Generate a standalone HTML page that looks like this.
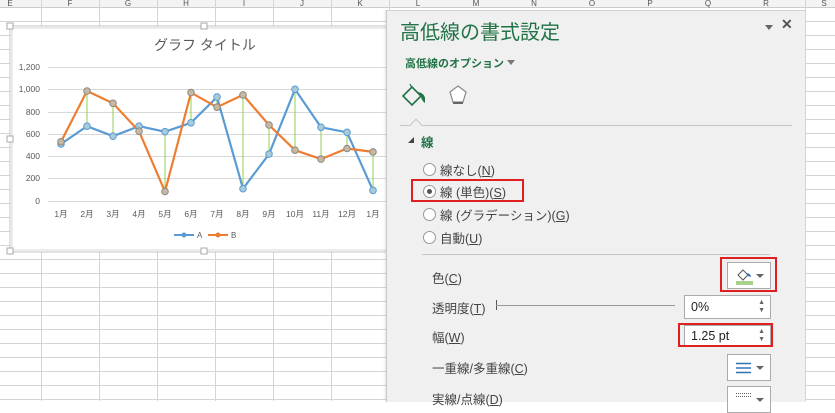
<!DOCTYPE html>
<html><head><meta charset="utf-8"><style>
body{margin:0;width:835px;height:401px;overflow:hidden;background:#fff;position:relative;font-family:"Liberation Sans","Noto Sans CJK JP",sans-serif;}
.abs{position:absolute}
.p{color:#444;font-size:12.5px}
.u{text-decoration:underline}
.rad{position:absolute;width:11px;height:11px;border:1px solid #999;border-radius:50%;background:#fff}
.box{position:absolute;background:#fff;border:1px solid #aaa;box-sizing:border-box}
.red{position:absolute;border:2px solid #e02020;box-sizing:border-box}
.spin{position:absolute;right:5px;font-size:7px;color:#666;line-height:8px}
.dd{position:absolute;right:6px;top:50%;margin-top:-2px;width:0;height:0;border-left:4px solid transparent;border-right:4px solid transparent;border-top:4px solid #666}
</style></head><body>
<svg class="abs" style="left:0;top:0" width="835" height="401">
<rect x="0" y="0" width="835" height="7" fill="#f3f3f3"/>
<line x1="0" y1="7.5" x2="835" y2="7.5" stroke="#ccc"/>
<g stroke="#d4d4d4" stroke-width="1">
<path d="M41.5 0V401M99.5 0V401M157.5 0V401M215.5 0V401M273.5 0V401M331.5 0V401M389.5 0V401M805.5 0V401"/>
<path d="M0 21.5H835M0 35.5H835M0 49.5H835M0 63.5H835M0 77.5H835M0 91.5H835M0 105.5H835M0 119.5H835M0 133.5H835M0 147.5H835M0 161.5H835M0 175.5H835M0 189.5H835M0 203.5H835M0 217.5H835M0 231.5H835M0 245.5H835M0 259.5H835M0 273.5H835M0 287.5H835M0 301.5H835M0 315.5H835M0 329.5H835M0 343.5H835M0 357.5H835M0 371.5H835M0 385.5H835M0 399.5H835"/>
</g>
<g font-size="8" fill="#555" text-anchor="middle"><text x="10" y="6">E</text><text x="70" y="6">F</text><text x="128" y="6">G</text><text x="186" y="6">H</text><text x="244" y="6">I</text><text x="302" y="6">J</text><text x="360" y="6">K</text><text x="418" y="6">L</text><text x="476" y="6">M</text><text x="534" y="6">N</text><text x="592" y="6">O</text><text x="650" y="6">P</text><text x="708" y="6">Q</text><text x="766" y="6">R</text><text x="824" y="6">S</text></g>
<!-- chart -->
<rect x="10" y="26" width="380" height="226" fill="#fff" stroke="#c6c6c6"/>
<rect x="12" y="28" width="376" height="222" fill="#fff" stroke="#d9d9d9"/>
<g fill="#fff" stroke="#aaa"><rect x="7" y="23" width="6" height="6"/><rect x="201" y="23" width="6" height="6"/><rect x="7" y="136" width="6" height="6"/><rect x="7" y="248" width="6" height="6"/><rect x="201" y="248" width="6" height="6"/></g>
<text x="205" y="50" text-anchor="middle" font-size="14" fill="#595959">グラフ タイトル</text>
<g stroke="#d9d9d9"><path d="M48 67.5H386M48 89.5H386M48 112.5H386M48 134.5H386M48 156.5H386M48 178.5H386M48 201.5H386"/></g>
<g font-size="8.5" fill="#595959" text-anchor="end"><text x="40" y="70">1,200</text><text x="40" y="92">1,000</text><text x="40" y="115">800</text><text x="40" y="137">600</text><text x="40" y="159">400</text><text x="40" y="181">200</text><text x="40" y="204">0</text></g>
<g font-size="8.5" fill="#595959" text-anchor="middle"><text x="61" y="217">1月</text><text x="87" y="217">2月</text><text x="113" y="217">3月</text><text x="139" y="217">4月</text><text x="165" y="217">5月</text><text x="191" y="217">6月</text><text x="217" y="217">7月</text><text x="243" y="217">8月</text><text x="269" y="217">9月</text><text x="295" y="217">10月</text><text x="321" y="217">11月</text><text x="347" y="217">12月</text><text x="373" y="217">1月</text></g>
<g stroke="#92d050" stroke-width="1"><path d="M61 144V142M87 126V91M113 136V103M139 126V131M165 132V191M191 123V93M217 97V107M243 189V95M269 154V125M295 89V150M321 127V159M347 132V148M373 190V152"/></g>
<polyline fill="none" stroke="#5b9bd5" stroke-width="2.2" points="61,144 87,126.2 113,136.2 139,126.2 165,131.7 191,122.8 217,97.1 243,188.7 269,154.1 295,89.3 321,127.3 347,132.3 373,190.4"/>
<polyline fill="none" stroke="#ed7d31" stroke-width="2.2" points="61,141.8 87,91 113,103.3 139,131.2 165,191.5 191,92.6 217,107.2 243,94.9 269,125 295,150.2 321,159.1 347,148.5 373,151.9"/>
<g fill="#a9cbd8" stroke="#5b9bd5" stroke-width="1"><circle cx="61" cy="144" r="3.3"/><circle cx="87" cy="126.2" r="3.3"/><circle cx="113" cy="136.2" r="3.3"/><circle cx="139" cy="126.2" r="3.3"/><circle cx="165" cy="131.7" r="3.3"/><circle cx="191" cy="122.8" r="3.3"/><circle cx="217" cy="97.1" r="3.3"/><circle cx="243" cy="188.7" r="3.3"/><circle cx="269" cy="154.1" r="3.3"/><circle cx="295" cy="89.3" r="3.3"/><circle cx="321" cy="127.3" r="3.3"/><circle cx="347" cy="132.3" r="3.3"/><circle cx="373" cy="190.4" r="3.3"/></g>
<g fill="#c8b8a0" stroke="#888" stroke-width="1"><circle cx="61" cy="141.8" r="3.3"/><circle cx="87" cy="91" r="3.3"/><circle cx="113" cy="103.3" r="3.3"/><circle cx="139" cy="131.2" r="3.3"/><circle cx="165" cy="191.5" r="3.3"/><circle cx="191" cy="92.6" r="3.3"/><circle cx="217" cy="107.2" r="3.3"/><circle cx="243" cy="94.9" r="3.3"/><circle cx="269" cy="125" r="3.3"/><circle cx="295" cy="150.2" r="3.3"/><circle cx="321" cy="159.1" r="3.3"/><circle cx="347" cy="148.5" r="3.3"/><circle cx="373" cy="151.9" r="3.3"/></g>
<line x1="174" y1="235" x2="194" y2="235" stroke="#5b9bd5" stroke-width="2"/><circle cx="184" cy="235" r="2.5" fill="#5b9bd5"/>
<text x="197" y="238" font-size="8" fill="#595959">A</text>
<line x1="208" y1="235" x2="228" y2="235" stroke="#ed7d31" stroke-width="2"/><circle cx="218" cy="235" r="2.5" fill="#ed7d31"/>
<text x="231" y="238" font-size="8" fill="#595959">B</text>
</svg>
<!-- panel -->
<div class="abs" style="left:383px;top:10px;width:3px;height:391px;background:linear-gradient(to right,rgba(0,0,0,0),rgba(0,0,0,.08))"></div>
<div class="abs" style="left:386px;top:10px;width:418px;height:391px;background:#f0f0f0;border-left:1px solid #c8c8c8;border-top:1px solid #d0d0d0"></div>
<div class="abs" style="left:400px;top:16px;font-size:20px;color:#217346;white-space:nowrap">高低線の書式設定</div>
<div class="abs" style="left:765px;top:25px;width:0;height:0;border-left:4px solid transparent;border-right:4px solid transparent;border-top:5px solid #666"></div>
<div class="abs" style="left:781px;top:16px;font-size:14px;font-weight:bold;color:#555">✕</div>
<div class="abs" style="left:405px;top:55px;font-size:11px;font-weight:bold;color:#217346;white-space:nowrap">高低線のオプション</div>
<div class="abs" style="left:507px;top:60px;width:0;height:0;border-left:4px solid transparent;border-right:4px solid transparent;border-top:5px solid #777"></div>
<svg class="abs" style="left:400px;top:82px" width="70" height="30">
<path d="M3 14 L12 5 L21 14 L12 23 Z" fill="none" stroke="#217346" stroke-width="1.6"/>
<path d="M10 2 L12 6" stroke="#217346" stroke-width="1.2"/>
<path d="M18 10 Q24 11 25 16 L25 21 Q22 19 21 15 Z" fill="#217346"/>
<path d="M58 4 L66 10 L63 20 L53 20 L50 10 Z" fill="#fff" stroke="#888" stroke-width="1.2"/>
<path d="M53 21 H63" stroke="#666" stroke-width="2"/>
</svg>
<svg class="abs" style="left:400px;top:115px" width="395" height="12"><path d="M0 10.5 H10 L16 4 L22 10.5 H392" fill="none" stroke="#c6c6c6"/></svg>
<div class="abs" style="left:408px;top:137px;width:0;height:0;border-left:6px solid transparent;border-bottom:6px solid #444"></div>
<div class="abs" style="left:421px;top:132px;font-size:12.5px;font-weight:bold;color:#217346">線</div>
<div class="rad" style="left:423px;top:163px"></div><div class="abs p" style="left:440px;top:160px">線なし(<span class="u">N</span>)</div>
<div class="rad" style="left:423px;top:185px"></div><div class="abs" style="left:427px;top:189px;width:5px;height:5px;border-radius:50%;background:#555"></div><div class="abs p" style="left:440px;top:182px">線 (単色)(<span class="u">S</span>)</div>
<div class="red" style="left:411px;top:179px;width:113px;height:23px"></div>
<div class="rad" style="left:423px;top:208px"></div><div class="abs p" style="left:440px;top:205px">線 (グラデーション)(<span class="u">G</span>)</div>
<div class="rad" style="left:423px;top:231px"></div><div class="abs p" style="left:440px;top:228px">自動(<span class="u">U</span>)</div>
<div class="abs" style="left:422px;top:254px;width:348px;height:1px;background:#c6c6c6"></div>
<div class="abs p" style="left:432px;top:268px">色(<span class="u">C</span>)</div>
<div class="box" style="left:727px;top:262px;width:44px;height:27px"><svg class="abs" style="left:7px;top:4px" width="20" height="18"><path d="M3 8 L8 3 L13 8 L8 13 Z" fill="none" stroke="#555"/><path d="M12 6 Q16 7 16 10 L13 9Z" fill="#2e75b6"/><rect x="1" y="14" width="17" height="4" fill="#a9d18e"/></svg><div class="dd"></div></div>
<div class="red" style="left:720px;top:257px;width:57px;height:35px"></div>
<div class="abs p" style="left:432px;top:298px">透明度(<span class="u">T</span>)</div>
<div class="abs" style="left:496px;top:300px;width:1px;height:10px;background:#555"></div>
<div class="abs" style="left:496px;top:305px;width:179px;height:1px;background:#999"></div>
<div class="box" style="left:684px;top:295px;width:87px;height:24px"><span class="abs" style="left:6px;top:4px;font-size:12.5px;color:#222">0%</span><span class="spin" style="top:3px">▲<br>▼</span></div>
<div class="abs p" style="left:432px;top:327px">幅(<span class="u">W</span>)</div>
<div class="box" style="left:684px;top:325px;width:87px;height:22px"><span class="abs" style="left:6px;top:3px;font-size:12.5px;color:#222">1.25 pt</span><span class="spin" style="top:2px">▲<br>▼</span></div>
<div class="red" style="left:678px;top:323px;width:95px;height:24px"></div>
<div class="abs p" style="left:432px;top:358px">一重線/多重線(<span class="u">C</span>)</div>
<div class="box" style="left:727px;top:354px;width:44px;height:27px"><svg class="abs" style="left:8px;top:7px" width="16" height="12"><path d="M0 1.5H15M0 6H15M0 10.5H15" stroke="#2e75b6" stroke-width="1.5"/></svg><div class="dd"></div></div>
<div class="abs p" style="left:432px;top:389px">実線/点線(<span class="u">D</span>)</div>
<div class="box" style="left:727px;top:386px;width:44px;height:27px"><svg class="abs" style="left:8px;top:5px" width="16" height="8"><path d="M0 1.5H15M0 4.5H15" stroke="#666" stroke-dasharray="1 1"/></svg><div class="dd"></div></div>
</body></html>
